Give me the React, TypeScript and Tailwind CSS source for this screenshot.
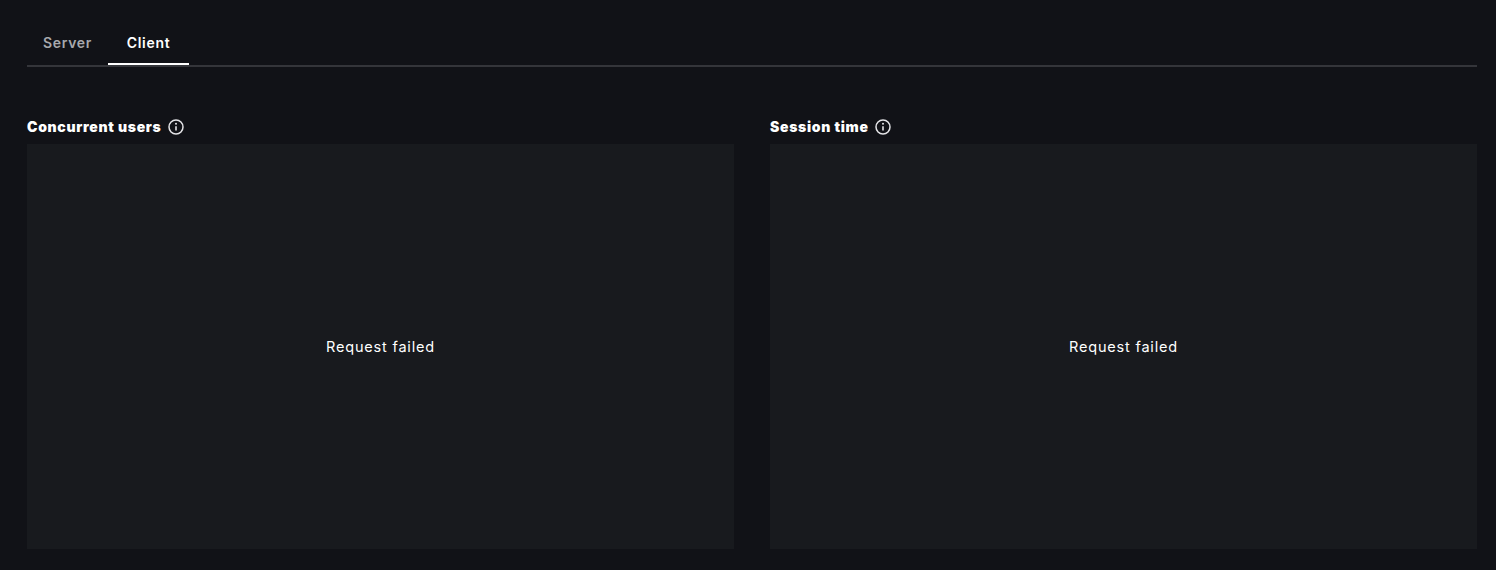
import React from "react";

const InfoIcon = () => (
  <svg width="16" height="16" viewBox="0 0 16 16" fill="none" stroke="#e4e4e7" strokeWidth="1.5">
    <circle cx="8" cy="8" r="7" />
    <path d="M8 7.2v4.3" strokeWidth="1.6" />
    <circle cx="8" cy="4.8" r="1" fill="#e4e4e7" stroke="none" />
  </svg>
);

const Panel = ({ title }: { title: string }) => (
  <div className="flex flex-col">
    <div className="flex items-center h-[20px] mb-[7px] gap-[6px]">
      <h2 className="pb-[2px] text-[14px] font-black text-white tracking-[0.68px]">{title}</h2>
      <InfoIcon />
    </div>
    <div className="h-[405px] bg-[#181a1e] flex items-center justify-center">
      <p className="text-[14.5px] text-white tracking-[0.8px]">Request failed</p>
    </div>
  </div>
);

const App = () => {
  return (
    <div className="h-[570px] bg-[#111217] pl-[27px] pr-[19px] pt-[21px] overflow-hidden font-['Inter',sans-serif]">
      <div className="flex h-[46px] border-b-2 border-[#34353a]">
        <button className="w-[81px] h-[44px] text-[14px] font-semibold text-[#a8a9ad] tracking-[0.7px] border-b-2 border-transparent">
          Server
        </button>
        <button className="w-[81px] h-[44px] text-[14px] font-semibold text-white tracking-[0.7px] border-b-2 border-white">
          Client
        </button>
      </div>
      <div className="grid grid-cols-2 gap-[36px] mt-[50px]">
        <Panel title="Concurrent users" />
        <Panel title="Session time" />
      </div>
    </div>
  );
};

export default App;
